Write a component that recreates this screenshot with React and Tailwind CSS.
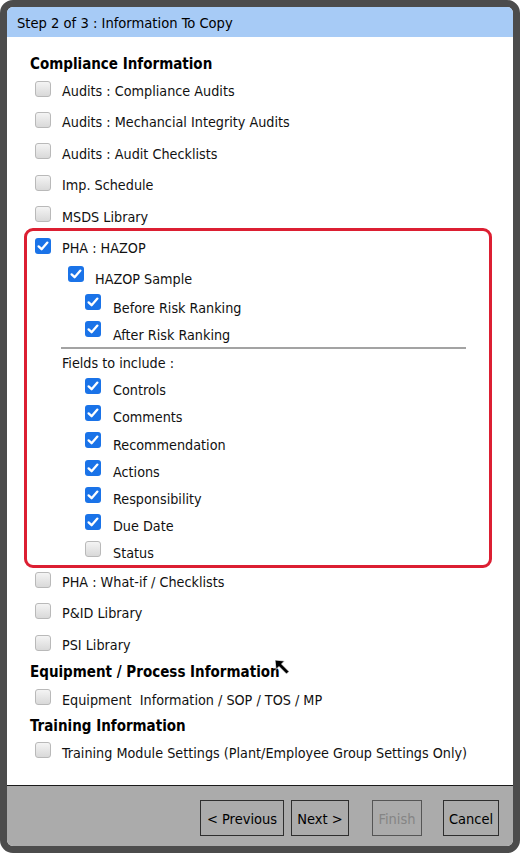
import React from 'react'

function Box({ checked, className = '' }) {
  if (checked) {
    return (
      <span className={`w-4 h-4 shrink-0 rounded-[3px] bg-[#1a73e8] flex items-center justify-center ${className}`}>
        <svg viewBox="0 0 16 16" className="w-4 h-4">
          <path d="M3.6 8.4 L6.6 11.2 L12.4 4.6" stroke="#fff" strokeWidth="2.3" fill="none" strokeLinecap="round" strokeLinejoin="round" />
        </svg>
      </span>
    )
  }
  return (
    <span className={`w-4 h-4 shrink-0 rounded-[3px] border border-[#b9b9b9] bg-linear-to-b from-[#f4f4f4] to-[#d9d9d9] ${className}`} />
  )
}

function Item({ checked, label, row = 'h-[31px] pl-[28px]', gap = 'gap-[11px]', box = 'mb-[2px]' }) {
  return (
    <div className={`flex items-center ${row} ${gap}`}>
      <Box checked={checked} className={box} />
      <span className="pt-[4px]">{label}</span>
    </div>
  )
}

function Heading({ children, className }) {
  return <div className={`flex items-center pl-[23px] pt-[4px] font-bold text-[15px] text-black ${className}`}>{children}</div>
}

function Btn({ children, w, disabled }) {
  return (
    <button className={`${w} h-9 pt-[3px] border border-[#2e2e2e] bg-[#ababab] text-[14.5px] ${disabled ? 'text-[#858585] border-[#555]' : 'text-black'}`}>
      {children}
    </button>
  )
}

const fields = [
  ['Controls', true],
  ['Comments', true],
  ['Recommendation', true],
  ['Actions', true],
  ['Responsibility', true],
  ['Due Date', true],
]

export default function App() {
  return (
    <div className="w-[520px] h-[855px] bg-white font-['DejaVu_Sans',sans-serif] [font-stretch:condensed] text-[14.25px] text-[#111] relative">
      <div className="h-[853px] rounded-[13px] border-[7px] border-[#4c4c4c] overflow-hidden flex flex-col">
        <div className="h-[30px] shrink-0 bg-[#a7cbf6] flex items-center pl-[10px] pt-[2px] text-[14.6px] text-black">
          Step 2 of 3 : Information To Copy
        </div>

        <div className="flex-1 bg-white pt-[14px]">
          <Heading className="h-[23px]">Compliance Information</Heading>
          <Item label="Audits : Compliance Audits" />
          <Item label="Audits : Mechancial Integrity Audits" row="h-[31.5px] pl-[28px]" />
          <Item label="Audits : Audit Checklists" row="h-[31.5px] pl-[28px]" />
          <Item label="Imp. Schedule" row="h-[31.5px] pl-[28px]" />
          <Item label="MSDS Library" row="h-[31.5px] pl-[28px]" />

          <div className="ml-[17px] w-[468px] border-[3px] border-[#dc1f32] rounded-[9px] mt-[-3px]">
            <Item checked label="PHA : HAZOP" row="h-[32px] pl-[8px]" />
            <Item checked label="HAZOP Sample" row="h-[30px] pl-[41px]" box="mb-[8px]" />
            <Item checked label="Before Risk Ranking" row="h-[27px] pl-[58px]" gap="gap-[12px]" box="mb-[10px]" />
            <Item checked label="After Risk Ranking" row="h-[27px] pl-[58px]" gap="gap-[12px]" box="mb-[10px]" />
            <div className="ml-[34px] w-[405px] h-[2px] bg-[#a3a3a3]" />
            <div className="h-[26px] flex items-center pl-[35px] pt-[4px]">Fields to include :</div>
            {fields.map(([l, c]) => (
              <Item key={l} checked={c} label={l} row="h-[27.3px] pl-[58px]" gap="gap-[12px]" box="mb-[6px]" />
            ))}
            <Item label="Status" row="h-[26px] pl-[58px]" gap="gap-[12px]" box="mb-[6px]" />
          </div>

          <Item label="PHA : What-if / Checklists" row="h-[31.5px] pl-[28px] mt-[-3px]" />
          <Item label="P&ID Library" row="h-[31.5px] pl-[28px]" />
          <Item label="PSI Library" row="h-[31.5px] pl-[28px]" />
          <Heading className="h-[22px]">Equipment / Process Information</Heading>
          <Item label="Equipment  Information / SOP / TOS / MP" row="h-[34px] pl-[28px] whitespace-pre" />
          <Heading className="h-[18px]">Training Information</Heading>
          <Item label="Training Module Settings (Plant/Employee Group Settings Only)" row="h-[36px] pl-[28px]" />
        </div>

        <div className="h-[61px] shrink-0 border-t border-[#1a1a1a] bg-[#ababab] flex items-start justify-end pt-[14px] pr-[14px]">
          <Btn w="w-[84px]">&lt; Previous</Btn>
          <div className="w-[7px]" />
          <Btn w="w-[58px]">Next &gt;</Btn>
          <div className="w-[23px]" />
          <Btn w="w-[50px]" disabled>Finish</Btn>
          <div className="w-[21px]" />
          <Btn w="w-[56px]">Cancel</Btn>
        </div>
      </div>

      <svg viewBox="0 0 16 17" className="absolute left-[274px] top-[659px] w-[16px] h-[17px]">
        <path d="M1 1 L10.5 2 L7.5 5 L15 12.5 L12.5 15 L5 7.5 L2 10.5 Z" fill="#000" stroke="#fff" strokeWidth="0.7" strokeLinejoin="round" />
      </svg>
    </div>
  )
}
